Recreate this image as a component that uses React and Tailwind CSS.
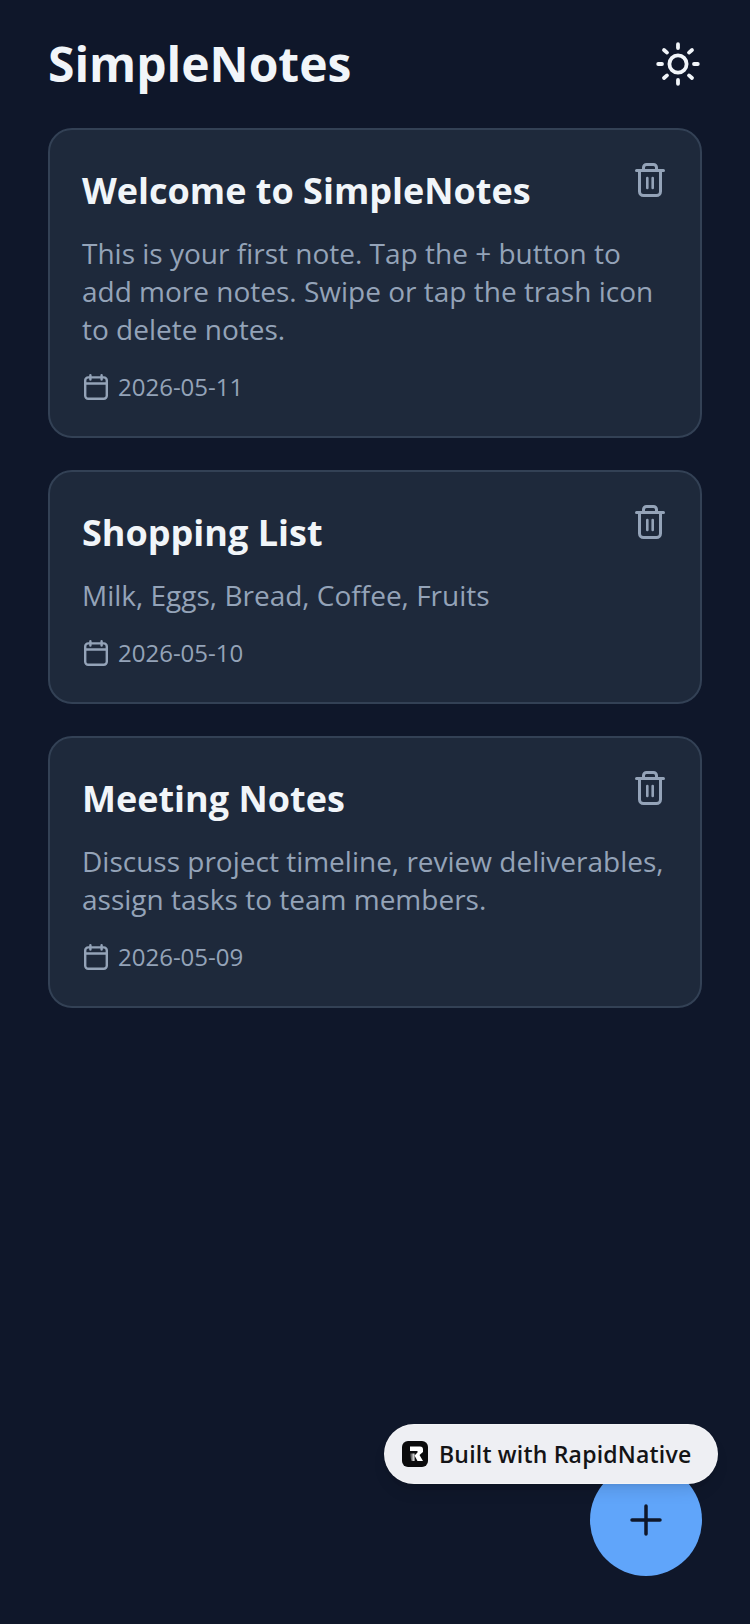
import React from "react";
import { Plus } from "lucide-react";

const Trash = () => (
  <svg width="30" height="34" viewBox="0 0 30 34" fill="none" stroke="#94a3b8" strokeWidth="3" strokeLinecap="round" strokeLinejoin="round" className="block">
    <path d="M1.5 7.5h27" />
    <path d="M8.5 7V4.5a3 3 0 0 1 3-3h7a3 3 0 0 1 3 3V7" />
    <path d="M4.5 8v20.5a4 4 0 0 0 4 4h13a4 4 0 0 0 4-4V8" />
    <path d="M12.3 15v10M17.7 15v10" strokeWidth="2.6" />
  </svg>
);

const Calendar = () => (
  <svg width="24" height="26" viewBox="0 0 24 26" fill="none" stroke="#94a3b8" strokeWidth="2.4" strokeLinecap="round" strokeLinejoin="round" className="block shrink-0">
    <rect x="1.2" y="3.4" width="21.6" height="21.4" rx="3" />
    <path d="M1.2 9.5h21.6M6.4 1.2v4.4M17.6 1.2v4.4" />
  </svg>
);

const Sun = () => (
  <svg width="44" height="44" viewBox="0 0 44 44" fill="none" stroke="#f1f5f9" strokeWidth="3.8" strokeLinecap="round" className="block">
    <circle cx="22" cy="22" r="8.6" />
    <path d="M22 2.2v3.8M22 38v3.8M2.2 22H6M38 22h3.8M8 8l3 2.6M33 33.4l3 2.6M8 36l3-2.6M33 10.6l3-2.6" />
  </svg>
);

const Logo = () => (
  <svg width="26" height="26" viewBox="0 0 26 26" className="block shrink-0">
    <defs>
      <linearGradient id="logoFade" x1="0" x2="1" y1="0" y2="0">
        <stop offset="0" stopColor="#0b0b0c" />
        <stop offset="1" stopColor="#ffffff" />
      </linearGradient>
    </defs>
    <rect width="26" height="26" rx="6" fill="#0b0b0c" />
    <path d="M8 5.5h10a3 3 0 0 1 3 3v2.5l-3.5 3 3.5 6h-5.5l-3-5.5 3-3V10H8z" fill="#fff" />
    <path d="M7.5 12.5h5v7.5h-3z" fill="url(#logoFade)" />
  </svg>
);

const notes = [
  { t: "Welcome to SimpleNotes", b: "This is your first note. Tap the + button to add more notes. Swipe or tap the trash icon to delete notes.", d: "2026-05-11" },
  { t: "Shopping List", b: "Milk, Eggs, Bread, Coffee, Fruits", d: "2026-05-10" },
  { t: "Meeting Notes", b: "Discuss project timeline, review deliverables, assign tasks to team members.", d: "2026-05-09" },
];

export default function App() {
  return (
    <div className="relative h-[1624px] w-[750px] overflow-hidden bg-[#0f172a] font-['Open_Sans',sans-serif]">
      <header className="flex h-[128px] items-center justify-between px-[48px]">
        <h1 className="text-[48px] leading-[64px] font-bold text-[#f1f5f9]">SimpleNotes</h1>
        <button className="mr-[2px]"><Sun /></button>
      </header>
      <main className="flex flex-col gap-[32px] px-[48px]">
        {notes.map((n) => (
          <article key={n.d} className="flex flex-col rounded-[24px] border-2 border-[#334155] bg-[#1e293b] px-[32px] pt-[32px] pb-[31px]">
            <div className="flex items-start justify-between">
              <h2 className="mt-[2px] text-[36px] leading-[54px] font-bold text-[#f1f5f9]">{n.t}</h2>
              <button className="mr-[3px] mt-[1px]"><Trash /></button>
            </div>
            <p className="mt-[16px] text-[28px] leading-[38px] text-[#94a3b8]">{n.b}</p>
            <div className="mt-[21px] flex items-center gap-[10px] pl-[2px] text-[24px] leading-[36px] text-[#94a3b8]">
              <Calendar />
              <span>{n.d}</span>
            </div>
          </article>
        ))}
      </main>
      <button className="absolute left-[590px] top-[1464px] flex h-[112px] w-[112px] items-center justify-center rounded-full bg-[#60a5fa]">
        <Plus size={48} color="#0f172a" strokeWidth={1.75} />
      </button>
      <div className="absolute left-[384px] top-[1424px] flex h-[60px] w-[334px] items-center gap-[11px] rounded-full border border-white/30 bg-[#eeeff3] pl-[17px] shadow-lg">
        <Logo />
        <span className="text-[23px] leading-[32px] font-[650] tracking-[0.2px] text-[#141416]">Built with RapidNative</span>
      </div>
    </div>
  );
}
